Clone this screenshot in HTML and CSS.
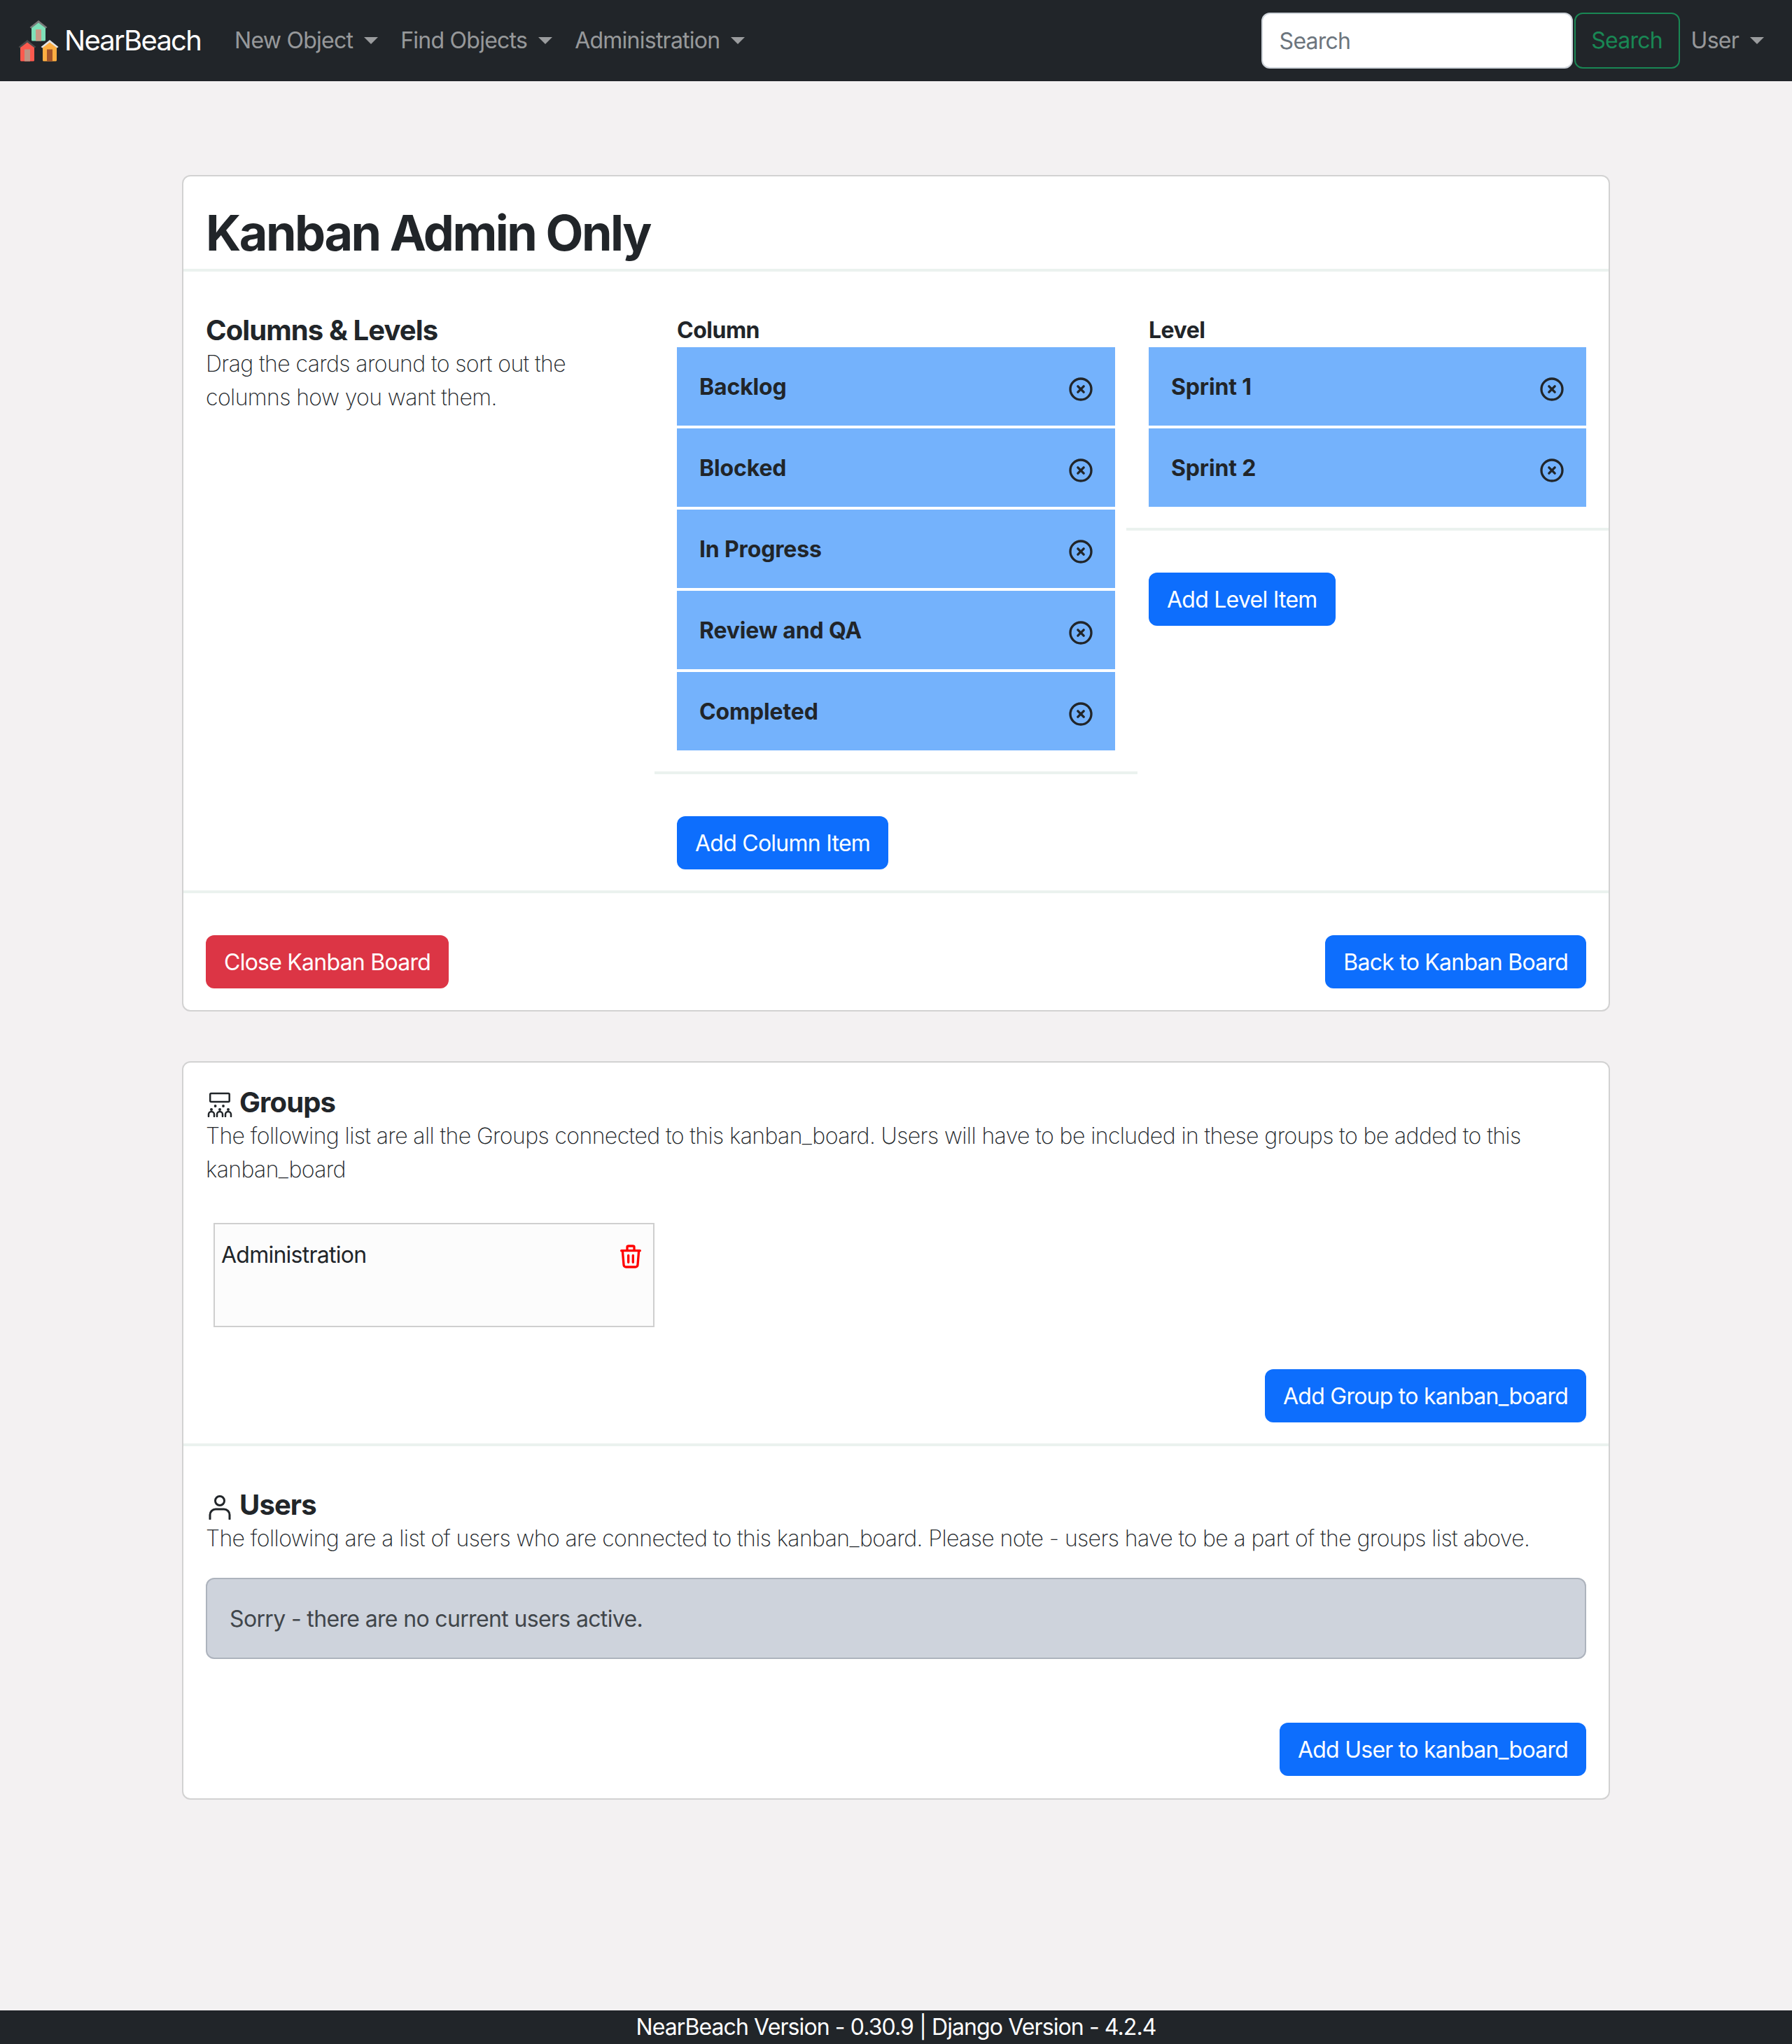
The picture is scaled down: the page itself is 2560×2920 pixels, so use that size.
FILE: index.html
```html
<!DOCTYPE html>
<html>
<head>
    <title>Kanban Admin Only - NearBeach</title>
    <link rel="stylesheet" href="styles.css">
</head>
<body>
    <nav class="navbar">
        <a class="brand" href="#">
            <svg class="brand-logo" width="60" height="60" viewBox="0 0 60 60">
                <path d="M19 11.500 L29 3 L39 11.500 V29 a1.500 1.500 0 0 1 -1.500 1.500 H20.500 a1.500 1.500 0 0 1 -1.500 -1.500 Z" fill="#7fe0b8"/>
                <path d="M16.500 11 L29 1 L41.500 11 L39.500 12.500 L29 4.500 L18.500 12.500 Z" fill="#7a7a7a"/>
                <rect x="25" y="14" width="8" height="16.500" fill="#c99a86"/>
                <path d="M3 39.500 L13 31 L23 39.500 V58 a1.500 1.500 0 0 1 -1.500 1.500 H4.500 a1.500 1.500 0 0 1 -1.500 -1.500 Z" fill="#fb5a4e"/>
                <path d="M0.500 39 L13 29 L25.500 39 L23.500 40.500 L13 32.500 L2.500 40.500 Z" fill="#4a4a4a"/>
                <rect x="9" y="42.500" width="8" height="17" fill="#bd9484"/>
                <path d="M35 39.500 L45 31 L55 39.500 V58 a1.500 1.500 0 0 1 -1.500 1.500 H36.500 a1.500 1.500 0 0 1 -1.500 -1.500 Z" fill="#fdae42"/>
                <path d="M32.500 39 L45 29 L57.500 39 L55.500 40.500 L45 32.500 L34.500 40.500 Z" fill="#e4e4e4"/>
                <rect x="41" y="42.500" width="8" height="17" fill="#a4552a"/>
            </svg>
            NearBeach
        </a>
        <ul class="nav-list">
            <li><a class="nav-link" href="#">New Object<span class="caret"></span></a></li>
            <li><a class="nav-link" href="#">Find Objects<span class="caret"></span></a></li>
            <li><a class="nav-link" href="#">Administration<span class="caret"></span></a></li>
        </ul>
        <form class="search-form">
            <input class="search-input" type="text" placeholder="Search">
            <button class="search-button" type="button">Search</button>
        </form>
        <a class="nav-link nav-user" href="#">User<span class="caret"></span></a>
    </nav>

    <main class="page">
        <section class="card card-admin">
            <div class="card-title">
                <h1>Kanban Admin Only</h1>
            </div>
            <div class="board-grid">
                <div class="board-intro">
                    <h2>Columns &amp; Levels</h2>
                    <p class="muted">Drag the cards around to sort out the columns how you want them.</p>
                </div>
                <div class="board-col">
                    <div class="col-label">Column</div>
                    <div class="item-list">
                        <div class="item">Backlog
                            <svg class="item-close" viewBox="0 0 24 24"><circle cx="12" cy="12" r="9"/><path d="M9.500 9.500l5 5m0-5l-5 5"/></svg>
                        </div>
                        <div class="item">Blocked
                            <svg class="item-close" viewBox="0 0 24 24"><circle cx="12" cy="12" r="9"/><path d="M9.500 9.500l5 5m0-5l-5 5"/></svg>
                        </div>
                        <div class="item">In Progress
                            <svg class="item-close" viewBox="0 0 24 24"><circle cx="12" cy="12" r="9"/><path d="M9.500 9.500l5 5m0-5l-5 5"/></svg>
                        </div>
                        <div class="item">Review and QA
                            <svg class="item-close" viewBox="0 0 24 24"><circle cx="12" cy="12" r="9"/><path d="M9.500 9.500l5 5m0-5l-5 5"/></svg>
                        </div>
                        <div class="item">Completed
                            <svg class="item-close" viewBox="0 0 24 24"><circle cx="12" cy="12" r="9"/><path d="M9.500 9.500l5 5m0-5l-5 5"/></svg>
                        </div>
                    </div>
                    <hr class="col-rule">
                    <button class="btn btn-primary" type="button">Add Column Item</button>
                </div>
                <div class="board-col">
                    <div class="col-label">Level</div>
                    <div class="item-list">
                        <div class="item">Sprint 1
                            <svg class="item-close" viewBox="0 0 24 24"><circle cx="12" cy="12" r="9"/><path d="M9.500 9.500l5 5m0-5l-5 5"/></svg>
                        </div>
                        <div class="item">Sprint 2
                            <svg class="item-close" viewBox="0 0 24 24"><circle cx="12" cy="12" r="9"/><path d="M9.500 9.500l5 5m0-5l-5 5"/></svg>
                        </div>
                    </div>
                    <hr class="col-rule">
                    <button class="btn btn-primary" type="button">Add Level Item</button>
                </div>
            </div>
            <div class="card-actions">
                <button class="btn btn-danger" type="button">Close Kanban Board</button>
                <button class="btn btn-primary" type="button">Back to Kanban Board</button>
            </div>
        </section>

        <section class="card card-people">
            <div class="people-groups">
                <h2 class="icon-heading">
                    <svg class="heading-icon heading-icon-groups" viewBox="0 0 36 36">
                        <rect x="4.200" y="2" width="27.500" height="12" rx="1.500"/>
                        <g class="dots">
                            <circle cx="11.600" cy="20" r="1.900"/><circle cx="23" cy="20" r="1.900"/>
                            <circle cx="6" cy="25" r="2"/><circle cx="18" cy="25" r="2"/><circle cx="30" cy="25" r="2"/>
                        </g>
                        <path d="M2 35v-3a4 4 0 0 1 8 0v3M14 35v-3a4 4 0 0 1 8 0v3M26 35v-3a4 4 0 0 1 8 0v3"/>
                    </svg>
                    Groups
                </h2>
                <p class="muted">The following list are all the Groups connected to this kanban_board. Users will have to be included in these groups to be added to this kanban_board</p>
                <div class="group-card">
                    <span>Administration</span>
                    <svg class="group-remove" viewBox="0 0 24 24"><path d="M4 7h16M10 11v6M14 11v6M5 7l1 12a2 2 0 0 0 2 2h8a2 2 0 0 0 2-2l1-12M9 7v-3a1 1 0 0 1 1-1h4a1 1 0 0 1 1 1v3"/></svg>
                </div>
                <div class="row-end">
                    <button class="btn btn-primary" type="button">Add Group to kanban_board</button>
                </div>
            </div>
            <div class="people-users">
                <h2 class="icon-heading">
                    <svg class="heading-icon" viewBox="0 0 36 36">
                        <circle cx="18" cy="9" r="6.500"/>
                        <path d="M4 35v-6a8 8 0 0 1 8-8h12a8 8 0 0 1 8 8v6"/>
                    </svg>
                    Users
                </h2>
                <p class="muted">The following are a list of users who are connected to this kanban_board. Please note - users have to be a part of the groups list above.</p>
                <div class="alert">Sorry - there are no current users active.</div>
                <div class="row-end row-end-users">
                    <button class="btn btn-primary" type="button">Add User to kanban_board</button>
                </div>
            </div>
        </section>
    </main>

    <footer class="footer">NearBeach Version - 0.30.9 | Django Version - 4.2.4</footer>
</body>
</html>
```

FILE: styles.css
```css
* {
    box-sizing: border-box;
}
body {
    display: flex;
    flex-direction: column;
    min-height: 100vh;
    margin: 0;
    font-family: Inter, "Liberation Sans", sans-serif;
    font-size: 32px;
    line-height: 48px;
    letter-spacing: -0.75px;
    color: #212529;
    background-color: #f3f1f2;
}
a {
    text-decoration: none;
}

/* navbar */
.navbar {
    display: flex;
    align-items: center;
    height: 116px;
    padding: 0 24px 0 26px;
    background-color: #212529;
}
.brand {
    display: flex;
    align-items: center;
    gap: 6px;
    margin-right: 32px;
    font-size: 40px;
    letter-spacing: -1.75px;
    color: #fff;
}
.brand-logo {
    flex: none;
}
.nav-list {
    display: flex;
    margin: 0;
    padding: 0;
    list-style: none;
    flex: 1;
}
.nav-link {
    display: flex;
    align-items: center;
    padding: 0 16px;
    color: rgba(255, 255, 255, 0.55);
}
.caret {
    width: 0;
    height: 0;
    margin-left: 16px;
    border-top: 10px solid rgba(255, 255, 255, 0.55);
    border-left: 10px solid transparent;
    border-right: 10px solid transparent;
}
.search-form {
    display: flex;
}
.search-input {
    width: 445px;
    height: 80px;
    padding: 0 24px;
    font: inherit;
    letter-spacing: inherit;
    color: #212529;
    background: #fff;
    border: 2px solid #ced4da;
    border-radius: 12px;
}
.search-input::placeholder {
    color: #6c757d;
    opacity: 1;
}
.search-button {
    width: 151px;
    height: 80px;
    margin-left: 2px;
    padding: 0;
    font: inherit;
    letter-spacing: inherit;
    color: #198754;
    background: transparent;
    border: 2px solid #198754;
    border-radius: 12px;
}

/* cards */
.page {
    flex: 1;
    width: 2040px;
    margin: 0 auto;
    padding-top: 134px;
}
.card {
    background: #fff;
    border: 2px solid #d2d2d2;
    border-radius: 12px;
}
.card-people {
    margin-top: 71px;
}
.card-title {
    height: 136px;
    padding: 38px 32px 0;
    border-bottom: 4px solid #ebf2ef;
}
h1 {
    margin: 0;
    font-size: 70px;
    line-height: 86px;
    font-weight: 700;
    letter-spacing: -2.5px;
}
h2 {
    margin: 0;
    font-size: 40px;
    line-height: 48px;
    font-weight: 700;
    letter-spacing: -0.9px;
}
.muted {
    margin: 0;
    font-weight: 200;
    letter-spacing: -0.6px;
}

/* columns and levels */
.board-grid {
    display: grid;
    grid-template-columns: 625px 626px 625px;
    column-gap: 48px;
    padding: 60px 32px 30px;
    border-bottom: 4px solid #ebf2ef;
}
.board-intro {
    padding-right: 80px;
}
.col-label {
    font-weight: 700;
    letter-spacing: -0.5px;
}
.item-list {
    display: flex;
    flex-direction: column;
    gap: 4px;
}
.item {
    display: flex;
    justify-content: space-between;
    height: 112px;
    padding: 33px 32px 0;
    font-weight: 700;
    letter-spacing: -0.15px;
    background-color: #74b2fc;
}
.item-close {
    width: 40px;
    height: 40px;
    margin: 7px -3px 0 0;
    fill: none;
    stroke: #212529;
    stroke-width: 2;
    stroke-linecap: round;
    stroke-linejoin: round;
}
.col-rule {
    height: 4px;
    margin: 30px -32px 60px;
    border: 0;
    background-color: #ebf2ef;
}
.btn {
    height: 76px;
    padding: 2px 26px 0;
    font: inherit;
    letter-spacing: -0.75px;
    color: #fff;
    border: 0;
    border-radius: 12px;
}
.btn-primary {
    background-color: #0d6efd;
}
.btn-danger {
    background-color: #dc3545;
}
.card-actions {
    display: flex;
    justify-content: space-between;
    padding: 60px 32px 31px;
}

/* groups and users */
.people-groups {
    padding: 33px 32px 30px;
    border-bottom: 4px solid #ebf2ef;
}
.people-users {
    padding: 60px 32px 32px;
}
.icon-heading {
    display: flex;
    align-items: center;
    gap: 10px;
}
.heading-icon {
    width: 36px;
    height: 36px;
    margin: 6px 0 0 2px;
    fill: none;
    stroke: #212529;
    stroke-width: 3;
    stroke-linecap: round;
    stroke-linejoin: round;
}
.heading-icon-groups {
    stroke-width: 2.500;
}
.heading-icon .dots {
    fill: #212529;
    stroke: none;
}
.group-card {
    display: flex;
    justify-content: space-between;
    width: 630px;
    height: 149px;
    margin: 52px 0 60px 11px;
    padding: 20px 12px 0 9px;
    background-color: #fcfcfc;
    border: 2px solid #cfcfcf;
}
.group-remove {
    width: 40px;
    height: 40px;
    margin-top: 6px;
    fill: none;
    stroke: #f00;
    stroke-width: 2;
    stroke-linecap: round;
    stroke-linejoin: round;
}
.row-end {
    display: flex;
    justify-content: flex-end;
}
.row-end-users {
    margin-top: 91px;
}
.alert {
    margin-top: 32px;
    padding: 33px 32px 31px;
    letter-spacing: -0.65px;
    color: #41464b;
    background-color: #ced3dc;
    border: 2px solid #adb3bd;
    border-radius: 12px;
}

.footer {
    height: 48px;
    letter-spacing: -0.9px;
    text-align: center;
    color: #fff;
    background-color: #212529;
}
```
